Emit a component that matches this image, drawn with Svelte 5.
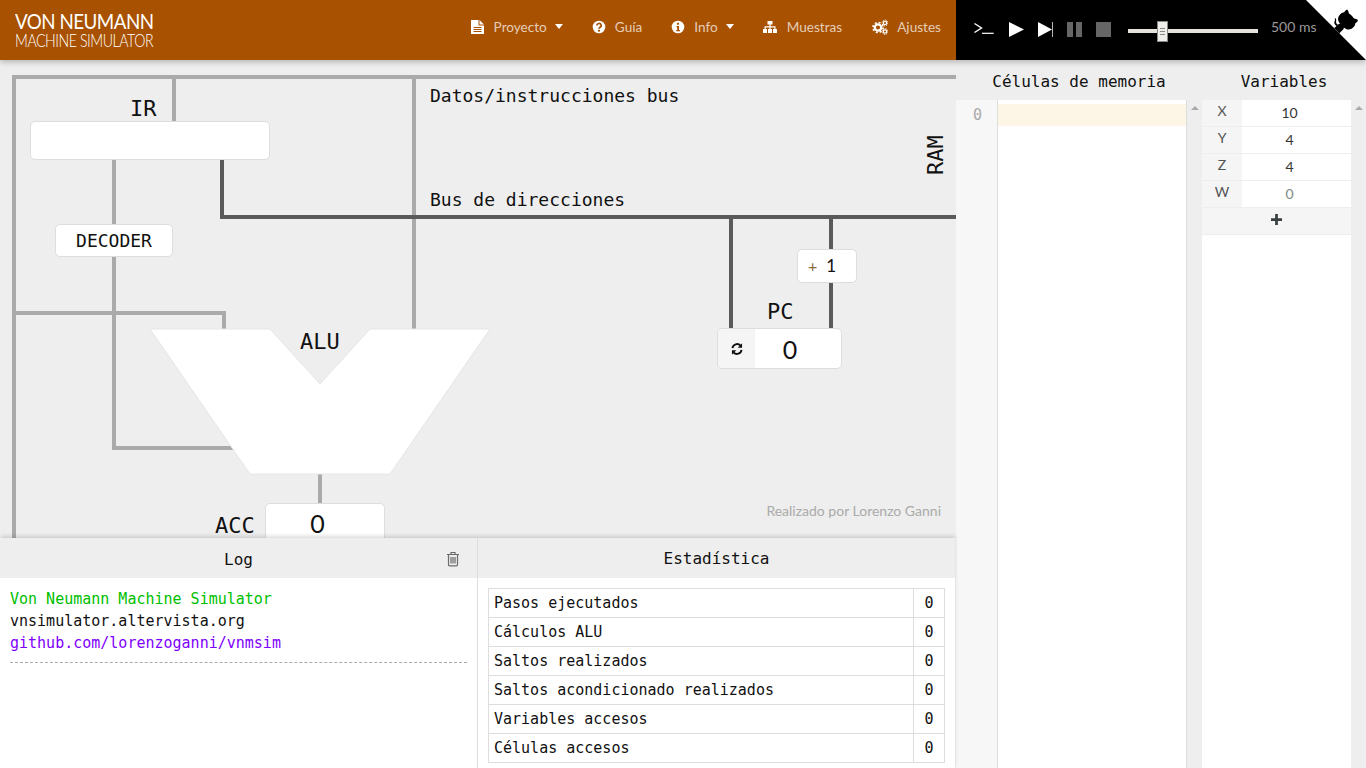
<script>
  const navItems = [
    { id: 'file', label: 'Proyecto', caret: true },
    { id: 'help', label: 'Guía' },
    { id: 'info', label: 'Info', caret: true },
    { id: 'sitemap', label: 'Muestras' },
    { id: 'cogs', label: 'Ajustes' }
  ];

  const variables = [
    { name: 'X', value: '10' },
    { name: 'Y', value: '4' },
    { name: 'Z', value: '4' },
    { name: 'W', value: '0', empty: true }
  ];

  const stats = [
    'Pasos ejecutados',
    'Cálculos ALU',
    'Saltos realizados',
    'Saltos acondicionado realizados',
    'Variables accesos',
    'Células accesos'
  ];
</script>

<div class="app">
  <header class="topbar">
    <div class="navbar">
      <div class="brand">
        <div class="brand-top">VON NEUMANN</div>
        <div class="brand-sub">MACHINE SIMULATOR</div>
      </div>
      <nav class="nav">
        {#each navItems as item}
          <span class="nav-item {item.id}">
            <svg class="nav-icon" viewBox="0 0 16 16" aria-hidden="true">
              {#if item.id === 'file'}
                <path fill="#fff" fill-rule="evenodd" d="M1 1h7.500v5.500H14V15H1zM9.500 1L14 5.500H9.500zM3.500 8v1h8V8zM3.500 10v1h8v-1zM3.500 12v1h8v-1z"/>
              {:else if item.id === 'help'}
                <circle cx="8" cy="8" r="6.300" fill="#fff"/>
                <path d="M5.800 6.500a2.200 2 0 1 1 3.300 1.700c-.8.5-1.100.9-1.100 1.600" fill="none" stroke="#a85100" stroke-width="1.700"/>
                <rect x="7" y="10.800" width="2" height="1.800" fill="#a85100"/>
              {:else if item.id === 'info'}
                <circle cx="8" cy="8" r="6.300" fill="#fff"/>
                <path d="M6.500 7h2.500v4h1v1.200H6.200V11h1V8.200h-.7zM7 3.800h2v2H7z" fill="#a85100"/>
              {:else if item.id === 'sitemap'}
                <path fill="#fff" d="M5.500 2h5v3.500H8.600V7.200H13.500V10H15v4h-4v-4h1.300V8.400H8.600V10H10v4H6v-4h1.400V8.400H3.700V10H5v4H1v-4h1.500V7.200h4.900V5.500H5.500z"/>
              {:else}
                <circle cx="6" cy="8.500" r="3.200" fill="none" stroke="#fff" stroke-width="2.200"/>
                <circle cx="6" cy="8.500" r="5" fill="none" stroke="#fff" stroke-width="1.600" stroke-dasharray="2 1.930"/>
                <circle cx="13" cy="4" r="1.700" fill="none" stroke="#fff" stroke-width="1.200"/>
                <circle cx="13" cy="12.500" r="1.700" fill="none" stroke="#fff" stroke-width="1.200"/>
                <circle cx="13" cy="4" r="2.900" fill="none" stroke="#fff" stroke-width="1" stroke-dasharray="1.200 1.080"/>
                <circle cx="13" cy="12.500" r="2.900" fill="none" stroke="#fff" stroke-width="1" stroke-dasharray="1.200 1.080"/>
              {/if}
            </svg>
            <span class="nav-label">{item.label}</span>
            {#if item.caret}<span class="caret"></span>{/if}
          </span>
        {/each}
      </nav>
    </div>

    <div class="controls">
      <svg class="term" viewBox="0 0 20 14" aria-hidden="true">
        <path d="M.5 1.500l7 4.500-7 4.500" fill="none" stroke="#fff" stroke-width="1.400"/>
        <rect x="8" y="10.700" width="11.700" height="1.200" fill="#fff"/>
      </svg>
      <svg class="ctl" viewBox="0 0 15 15" aria-hidden="true"><path d="M0 0l15 7.500L0 15z" fill="#fff"/></svg>
      <svg class="ctl" viewBox="0 0 15 15" aria-hidden="true"><path d="M0 0l14 7.500L0 15zM14.300 0h.7v15h-.7z" fill="#fff"/></svg>
      <svg class="ctl" viewBox="0 0 15 15" aria-hidden="true"><path d="M0 0h6v15H0zM9 0h6v15H9z" fill="#666"/></svg>
      <svg class="ctl" viewBox="0 0 15 15" aria-hidden="true"><rect width="15" height="15" fill="#666"/></svg>
      <div class="slider">
        <span class="handle"></span>
      </div>
      <span class="speed">500 ms</span>
      <svg class="corner" viewBox="0 0 250 250" aria-hidden="true">
        <path fill="#fff" d="M0 0L250 250V0z"/>
        <path fill="#000" d="M128.300 109C113.800 99.700 119 89.600 119 89.600C122 82.700 120.500 78.600 120.500 78.600C119.200 72 123.400 76.300 123.400 76.300C127.300 80.900 125.500 87.300 125.500 87.300C122.900 97.600 130.600 101.900 134.400 103.200"/>
        <path fill="#000" d="M115 115C114.900 115.100 118.700 116.500 119.800 115.400L133.700 101.600C136.900 99.200 139.900 98.400 142.200 98.600C133.800 88 127.500 74.400 143.800 58C148.500 53.400 154 51.200 159.700 51C160.300 49.400 163.200 43.600 171.400 40.100C171.400 40.100 176.100 42.500 178.800 56.200C183.100 58.600 187.200 61.800 190.900 65.400C194.500 69 197.700 73.200 200.100 77.600C213.800 80.200 216.300 84.900 216.300 84.900C212.700 93.100 206.900 96 205.400 96.600C205.100 102.400 203 107.800 198.300 112.500C181.900 128.900 168.300 122.500 157.700 114.100C157.900 116.900 156.700 120.900 152.700 124.900L141 136.500C139.800 137.700 141.600 141.900 141.800 141.800z"/>
      </svg>
    </div>
  </header>

  <div class="content">
    <main class="left">
      <section class="diagram">
        <svg class="wires" viewBox="0 60 956 478" aria-hidden="true">
          <g fill="none" stroke="#aaa" stroke-width="4">
            <path d="M14 538V77H956"/>
            <path d="M174 77V122"/>
            <path d="M414 77V330"/>
            <path d="M114 159V448H234"/>
            <path d="M14 313H224V330"/>
            <path d="M320 473V504"/>
          </g>
          <g fill="none" stroke="#5a5a5a" stroke-width="4">
            <path d="M222 159V217H956"/>
            <path d="M731 217V330"/>
            <path d="M831 217V330"/>
          </g>
          <polygon points="150,329 270,329 320,384 370,329 490,329 390,474 250,474" fill="#fff" stroke="#e6e6e6"/>
        </svg>

        <span class="label ir">IR</span>
        <div class="box ir-box"></div>
        <div class="box decoder">DECODER</div>
        <span class="label alu">ALU</span>
        <span class="label acc">ACC</span>
        <div class="box acc-box">0</div>
        <span class="label pc">PC</span>
        <div class="box pc-box">
          <span class="pc-addon">
            <svg class="refresh" viewBox="0 0 16 16" aria-hidden="true">
              <path d="M2.800 7A5.300 5.300 0 0 1 12 4.200" fill="none" stroke="#111" stroke-width="2.200"/>
              <path d="M13.800 1.500v5h-5z" fill="#111"/>
              <path d="M13.200 9A5.300 5.300 0 0 1 4 11.800" fill="none" stroke="#111" stroke-width="2.200"/>
              <path d="M2.200 14.500v-5h5z" fill="#111"/>
            </svg>
          </span>
          <span class="pc-value">0</span>
        </div>
        <div class="box plus-one"><span class="plus">+</span><span>1</span></div>
        <span class="bus data-bus">Datos/instrucciones bus</span>
        <span class="bus addr-bus">Bus de direcciones</span>
        <span class="label ram">RAM</span>
        <span class="credit">Realizado por Lorenzo Ganni</span>
      </section>

      <section class="panels">
        <div class="panel log">
          <div class="panel-head">
            <span class="log-title">Log</span>
            <svg class="trash" viewBox="0 0 14 16" aria-hidden="true">
              <path d="M1 3.500h12M5 3.200V1.500h4v1.700M2.500 3.500v10.300c0 .6.400 1 1 1h7c.6 0 1-.4 1-1V3.500M5 6v6.500M7 6v6.500M9 6v6.500" fill="none" stroke="#6b6b6b" stroke-width="1.200"/>
            </svg>
          </div>
          <div class="log-body">
            <div class="green">Von Neumann Machine Simulator</div>
            <div>vnsimulator.altervista.org</div>
            <div class="purple">github.com/lorenzoganni/vnmsim</div>
            <div class="dashed"></div>
          </div>
        </div>
        <div class="panel stats">
          <div class="panel-head">Estadística</div>
          <div class="stats-body">
            <table>
              <tbody>
                {#each stats as name}
                  <tr><td>{name}</td><td class="num">0</td></tr>
                {/each}
              </tbody>
            </table>
          </div>
        </div>
      </section>
    </main>

    <aside class="right">
      <div class="col-heads">
        <div class="head-mem">Células de memoria</div>
        <div class="head-var">Variables</div>
      </div>
      <div class="col-bodies">
        <div class="gutter">0</div>
        <div class="editor"><div class="active-line"></div></div>
        <div class="scrollbar"><span class="arrow"></span></div>
        <div class="vars">
          {#each variables as v}
            <div class="var-row">
              <span class="var-name">{v.name}</span>
              <span class="var-value" class:empty={v.empty}>{v.value}</span>
            </div>
          {/each}
          <div class="var-add">
            <svg viewBox="0 0 12 12" aria-hidden="true"><path d="M4.500 0h3v4.500H12v3H7.500V12h-3V7.500H0v-3h4.500z" fill="#3a3f3f"/></svg>
          </div>
        </div>
        <div class="scrollbar"><span class="arrow"></span></div>
      </div>
    </aside>
  </div>
</div>

<style>
  :global(body) {
    margin: 0;
    overflow: hidden;
    background: #eee;
  }

  .app {
    width: 1366px;
    height: 768px;
    display: flex;
    flex-direction: column;
    overflow: hidden;
    font-family: "DejaVu Sans Mono", monospace;
    color: #111;
  }

  .topbar {
    display: flex;
    height: 60px;
    flex: none;
    position: relative;
    z-index: 3;
    box-shadow: 0 2px 6px rgba(0, 0, 0, .25);
  }

  .navbar {
    width: 956px;
    background: #a85100;
    display: flex;
    align-items: center;
    justify-content: space-between;
    padding: 0 15px;
    box-sizing: border-box;
    font-family: Lato, sans-serif;
  }

  .brand {
    color: #fff;
    white-space: nowrap;
  }
  .brand-top {
    font-size: 21.500px;
    line-height: 22px;
    letter-spacing: -.6px;
    transform: scaleX(.873);
    transform-origin: left;
  }
  .brand-sub {
    font-size: 17.500px;
    line-height: 18px;
    font-weight: 300;
    letter-spacing: -.55px;
    transform: scaleX(.808);
    transform-origin: left;
  }

  .nav {
    display: flex;
    gap: 28px;
    margin-top: -7px;
  }
  .nav-item {
    display: flex;
    align-items: center;
    color: rgba(255, 255, 255, .72);
    font-size: 13.600px;
  }
  .nav-item.sitemap { margin-left: 1px; }
  .nav-item.cogs { margin-left: 3px; }
  .nav-icon { width: 16px; height: 16px; margin-right: 8px; }
  .sitemap .nav-icon, .cogs .nav-icon { margin-left: -1px; margin-right: 9px; }
  .caret {
    width: 0;
    height: 0;
    margin-left: 8px;
    border-left: 4.500px solid transparent;
    border-right: 4.500px solid transparent;
    border-top: 5px solid #fff;
  }

  .controls {
    width: 410px;
    background: #000;
    display: flex;
    align-items: center;
    padding-left: 18px;
    box-sizing: border-box;
    position: relative;
  }
  .ctl { width: 15px; height: 15px; margin-right: 14px; margin-top: -2px; }
  .term { width: 20px; height: 14px; margin-right: 15px; margin-top: -2px; }
  .slider {
    width: 130px;
    height: 4px;
    background: #e6e3dc;
    margin-left: 3px;
    margin-top: 2px;
    display: flex;
    align-items: center;
    padding-left: 29px;
    box-sizing: border-box;
  }
  .handle {
    width: 11px;
    height: 21px;
    flex: none;
    box-sizing: border-box;
    background: repeating-linear-gradient(#888 0 1px, transparent 1px 3px) center / 5px 7px no-repeat #efeee8;
    border: 1px solid #888;
  }
  .speed {
    font-family: Lato, sans-serif;
    font-size: 14px;
    color: #999;
    margin-left: 13px;
    margin-top: -8px;
  }
  .corner {
    position: absolute;
    top: 0;
    right: 0;
    width: 60px;
    height: 60px;
  }

  .content {
    flex: 1;
    display: flex;
    min-height: 0;
  }

  .left {
    width: 956px;
    flex: none;
    display: flex;
    flex-direction: column;
    position: relative;
    z-index: 1;
  }

  .diagram {
    position: relative;
    height: 478px;
    flex: none;
    overflow: hidden;
    background: #eee;
  }
  .wires {
    position: absolute;
    inset: 0;
    width: 956px;
    height: 478px;
  }
  .label {
    position: absolute;
    font-size: 22px;
    line-height: 26px;
  }
  .ir { left: 130px; top: 36px; }
  .alu { left: 300px; top: 269px; }
  .acc { left: 215px; top: 453px; }
  .pc { left: 767px; top: 239px; }
  .ram {
    left: 916px;
    top: 82px;
    transform: rotate(-90deg);
  }
  .box {
    position: absolute;
    background: #fff;
    border: 1px solid #ddd;
    border-radius: 5px;
    box-sizing: border-box;
    display: flex;
    align-items: center;
    justify-content: center;
  }
  .ir-box { left: 30px; top: 61px; width: 240px; height: 39px; }
  .decoder { left: 55px; top: 164px; width: 118px; height: 33px; font-size: 18px; }
  .acc-box {
    left: 265px;
    top: 443px;
    width: 120px;
    height: 60px;
    align-items: flex-start;
    padding: 4px 15px 0 0;
    font: 25px/30px Lato, sans-serif;
  }
  .plus-one {
    left: 797px;
    top: 189px;
    width: 60px;
    height: 34px;
    font: 17px Lato, sans-serif;
    justify-content: flex-start;
    gap: 9px;
    padding: 0 0 2px 10px;
  }
  .plus { color: #8a6d3b; font-size: 16px; }
  .pc-box {
    left: 717px;
    top: 268px;
    width: 125px;
    height: 41px;
    justify-content: flex-start;
    overflow: hidden;
  }
  .pc-addon {
    width: 37px;
    height: 100%;
    background: #f5f5f5;
    display: flex;
    align-items: center;
    justify-content: center;
  }
  .refresh { width: 14px; height: 14px; }
  .pc-value {
    flex: 1;
    font: 25px Lato, sans-serif;
    padding-right: 16px;
    text-align: center;
  }
  .bus {
    position: absolute;
    left: 430px;
    font-size: 18px;
    line-height: 22px;
  }
  .data-bus { top: 25px; }
  .addr-bus { top: 129px; }
  .credit {
    position: absolute;
    right: 15px;
    top: 442px;
    font: 14px Lato, sans-serif;
    color: #aaa;
  }

  .panels {
    flex: 1;
    display: flex;
    min-height: 0;
    position: relative;
    background: #fff;
    box-shadow: 0 -3px 4px -1px rgba(0, 0, 0, .14);
  }
  .panel { flex: 1; min-width: 0; }
  .log { border-right: 1px solid #ddd; flex: none; width: 478px; box-sizing: border-box; }
  .stats { border-right: 1px solid #e6e6e6; }
  .panel-head {
    height: 40px;
    background: #eee;
    display: flex;
    align-items: center;
    justify-content: center;
    position: relative;
    font-size: 16px;
  }
  .log-title { margin-top: 3px; }
  .trash {
    position: absolute;
    right: 17px;
    top: 13px;
    width: 14px;
    height: 16px;
  }
  .log-body {
    padding: 10px;
    font-size: 15px;
    line-height: 22px;
  }
  .green { color: #00c000; }
  .purple { color: #7f00ff; }
  .dashed {
    border-top: 1px dashed #aaa;
    margin-top: 8px;
  }
  .stats-body { padding: 10px; }
  table {
    width: 100%;
    border-collapse: collapse;
    font-size: 15px;
  }
  td {
    border: 1px solid #ddd;
    height: 28px;
    padding: 0 5px;
    line-height: 20px;
  }
  td.num { width: 20px; text-align: center; }

  .right {
    flex: 1;
    display: flex;
    flex-direction: column;
    min-width: 0;
    background: #eee;
  }
  .col-heads {
    display: flex;
    height: 40px;
    align-items: center;
    font-size: 16px;
    padding-top: 2px;
    box-sizing: border-box;
  }
  .head-mem { width: 246px; text-align: center; }
  .head-var { flex: 1; text-align: center; }
  .col-bodies {
    flex: 1;
    display: flex;
    min-height: 0;
  }
  .gutter {
    width: 42px;
    box-sizing: border-box;
    background: #f7f7f7;
    border-right: 1px solid #ddd;
    color: #aaa;
    font-size: 15px;
    line-height: 22px;
    padding: 4px 15px 0 0;
    text-align: right;
  }
  .editor {
    width: 189px;
    background: #fff;
    padding-top: 4px;
    box-sizing: border-box;
    border-right: 1px solid #ddd;
  }
  .active-line { height: 22px; background: #fdf5e6; }
  .scrollbar {
    width: 15px;
    flex: none;
    background: #eee;
    display: flex;
    justify-content: center;
    padding-top: 6px;
    box-sizing: border-box;
  }
  .arrow {
    width: 0;
    height: 0;
    border-left: 4px solid transparent;
    border-right: 4px solid transparent;
    border-bottom: 4px solid #aaa;
  }
  .vars {
    flex: 1;
    background: #fff;
    font-family: Lato, sans-serif;
    font-size: 14px;
  }
  .var-row {
    display: flex;
    height: 27px;
    box-sizing: border-box;
    border-bottom: 1px solid #eee;
  }
  .var-name {
    width: 40px;
    background: #f5f5f5;
    color: #555;
    text-align: center;
    line-height: 22px;
  }
  .var-value {
    flex: 1;
    text-align: center;
    line-height: 25px;
    padding-right: 14px;
    color: #333;
  }
  .var-value.empty { color: #7d8a84; }
  .var-add {
    height: 27px;
    background: #f5f5f5;
    border-bottom: 1px solid #eee;
    box-sizing: border-box;
    display: flex;
    align-items: center;
    justify-content: center;
  }
  .var-add svg { width: 11px; height: 11px; margin-bottom: 4px; }
</style>
